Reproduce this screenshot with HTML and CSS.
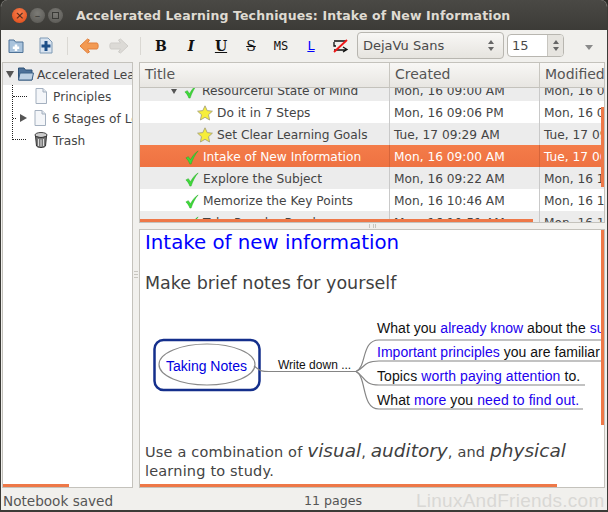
FILE: index.html
```html
<!DOCTYPE html>
<html lang="en">
<head>
<meta charset="utf-8">
<title>Accelerated Learning Techniques</title>
<link rel="stylesheet" href="styles.css">
</head>
<body>
<svg class="defs" width="0" height="0">
  <defs>
    <symbol id="check" viewBox="0 0 16 16"><path d="M1 8.500 L3.800 7 L6.300 10.500 C8.500 6.500 11 3 15 .5 C11.500 4.500 9 9.500 7 15.500 L5.500 15.500 C4.500 12.500 3 10.200 1 8.500Z" fill="#3fd93a" stroke="#1fa51f" stroke-width=".5"/></symbol>
    <symbol id="star" viewBox="0 0 16 16"><path d="M8 .8 L10.200 5.600 L15.400 6.200 L11.500 9.700 L12.600 15 L8 12.300 L3.400 15 L4.500 9.700 L.6 6.200 L5.800 5.600Z" fill="#f7ee3a" stroke="#a8a47a" stroke-width=".9"/></symbol>
    <symbol id="page" viewBox="0 0 14 16"><path d="M2 .5 H9 L12.500 4 V15.500 H2Z" fill="#f4f6f9" stroke="#a4b0bf"/><path d="M9 .5 V4 H12.500" fill="#dfe5ec" stroke="#a4b0bf"/></symbol>
  </defs>
</svg>
<div class="window">
  <header class="titlebar">
    <div class="controls">
      <span class="ctl ctl-close">×</span>
      <span class="ctl ctl-min">–</span>
      <span class="ctl ctl-max"><i class="ctl-square"></i></span>
    </div>
    <h1 class="wintitle">Accelerated Learning Techniques: Intake of New Information</h1>
  </header>

  <div class="toolbar">
    <button class="tool">
      <svg width="16" height="16" viewBox="0 0 16 16"><path d="M1 2 H6 L7.500 4 H15 V14.500 H1Z" fill="#a9c3dc" stroke="#4f7397"/><path d="M8 6.500 V13 M4.800 9.700 H11.200" stroke="#fff" stroke-width="2.500"/></svg>
    </button>
    <button class="tool">
      <svg width="16" height="18" viewBox="0 0 16 18"><path d="M2 1 H10 L14 5 V16 H2Z" fill="#d9e4f0" stroke="#7f9ab5"/><path d="M8 4 V14 M3.500 9 H12.500" stroke="#1d4f88" stroke-width="3"/></svg>
    </button>
    <span class="sep"></span>
    <button class="tool">
      <svg width="20" height="16" viewBox="0 0 20 16"><path d="M1 8 L8.500 1 L10.500 2 L8.500 5 H18 C19.500 5 19.500 11 18 11 H8.500 L10.500 14 L8.500 15Z" fill="#f39a53" stroke="#e07f3c"/></svg>
    </button>
    <button class="tool">
      <svg width="20" height="16" viewBox="0 0 20 16"><path d="M19 8 L11.500 1 L9.500 2 L11.500 5 H2 C.5 5 .5 11 2 11 H11.500 L9.500 14 L11.500 15Z" fill="#dcdad6" stroke="#cfcdc9"/></svg>
    </button>
    <span class="sep"></span>
    <button class="tool fmt fmt-b">B</button>
    <button class="tool fmt fmt-i">I</button>
    <button class="tool fmt fmt-u">U</button>
    <button class="tool fmt fmt-s">S</button>
    <button class="tool fmt fmt-m">MS</button>
    <button class="tool fmt fmt-l">L</button>
    <button class="tool">
      <svg width="16" height="14" viewBox="0 0 16 14"><path d="M1 2 H13 M1 3 V7 H3 M1 11 H13 M10 8 L14 10.500 L10 13" fill="none" stroke="#111" stroke-width="1.300"/><path d="M1 13 L14 1" stroke="#f01818" stroke-width="1.800"/></svg>
    </button>
    <div class="combo">
      <span class="combo-label">DejaVu Sans</span>
      <span class="updown"><i class="up"></i><i class="down"></i></span>
    </div>
    <div class="spin">
      <span class="spin-val">15</span>
      <span class="spin-btns"><i class="up"></i><i class="down"></i></span>
    </div>
    <i class="more"></i>
  </div>

  <main class="main">
    <aside class="tree">
      <div class="tree-row tree-root">
        <i class="arrow-down"></i>
        <svg class="folder" width="16" height="14" viewBox="0 0 16 14"><path d="M.5 1 H6 L7.500 3 H14 V13 H.5Z" fill="#4d7199" stroke="#2f5277"/><path d="M2 6 H15.500 L14 13 H.5Z" fill="#bdd0e3" stroke="#3d6288"/></svg>
        <span class="tree-label">Accelerated Learning</span>
      </div>
      <div class="tree-row tree-child">
        <svg class="ic-page" width="14" height="16"><use href="#page"/></svg>
        <span class="tree-label">Principles</span>
      </div>
      <div class="tree-row tree-child">
        <i class="arrow-right"></i>
        <svg class="ic-page" width="14" height="16"><use href="#page"/></svg>
        <span class="tree-label">6 Stages of Learning</span>
      </div>
      <div class="tree-row tree-child">
        <svg class="ic-trash" width="14" height="16" viewBox="0 0 14 16"><ellipse cx="7" cy="3" rx="6" ry="2.500" fill="#ccc" stroke="#444"/><path d="M1.500 4 L2.500 14 C4 16 10 16 11.500 14 L12.500 4 C10 6 4 6 1.500 4Z" fill="#777" stroke="#333"/><path d="M4.500 7 V14 M7 7.500 V14.500 M9.500 7 V14" stroke="#ddd"/></svg>
        <span class="tree-label">Trash</span>
      </div>
      <i class="tree-dots"></i>
      <i class="bar bar-tree"></i>
    </aside>

    <div class="sash-v"><i class="grip-v"></i></div>

    <div class="right">
      <section class="list">
        <div class="list-head">
          <div class="col">Title</div>
          <div class="col">Created</div>
          <div class="col">Modified</div>
        </div>
        <div class="list-body">
          <div class="rows">
            <div class="row even"><div class="cell t t2"><i class="arrow-down small"></i><svg class="ic" width="14" height="15"><use href="#check"/></svg>Resourceful State of Mind</div><div class="cell">Mon, 16 09:00 AM</div><div class="cell">Mon, 16 09:00 AM</div></div>
            <div class="row"><div class="cell t t3"><svg class="ic" width="16" height="16"><use href="#star"/></svg>Do it in 7 Steps</div><div class="cell">Mon, 16 09:06 PM</div><div class="cell">Mon, 16 09:06 PM</div></div>
            <div class="row even"><div class="cell t t3"><svg class="ic" width="16" height="16"><use href="#star"/></svg>Set Clear Learning Goals</div><div class="cell">Tue, 17 09:29 AM</div><div class="cell">Tue, 17 09:29 AM</div></div>
            <div class="row sel"><div class="cell t t1"><svg class="ic" width="14" height="15"><use href="#check"/></svg>Intake of New Information</div><div class="cell">Mon, 16 09:00 AM</div><div class="cell">Tue, 17 06:00 AM</div></div>
            <div class="row even"><div class="cell t t1"><svg class="ic" width="14" height="15"><use href="#check"/></svg>Explore the Subject</div><div class="cell">Mon, 16 09:22 AM</div><div class="cell">Mon, 16 10:22 AM</div></div>
            <div class="row"><div class="cell t t1"><svg class="ic" width="14" height="15"><use href="#check"/></svg>Memorize the Key Points</div><div class="cell">Mon, 16 10:46 AM</div><div class="cell">Mon, 16 10:46 AM</div></div>
            <div class="row even"><div class="cell t t1"><svg class="ic" width="14" height="15"><use href="#check"/></svg>Take Regular Breaks</div><div class="cell">Mon, 16 10:51 AM</div><div class="cell">Mon, 16 10:51 AM</div></div>
          </div>
          <i class="bar bar-list-v"></i>
          <i class="bar bar-list-h"></i>
        </div>
      </section>

      <div class="sash-h"><i class="grip-h"></i></div>

      <section class="editor">
        <h2 class="doc-title">Intake of new information</h2>
        <p class="doc-sub">Make brief notes for yourself</p>
        <div class="map">
          <svg class="map-lines" width="462" height="96" viewBox="0 0 462 96">
            <rect x="14.500" y="10" width="105" height="50" rx="9" fill="#fff" stroke="#142f8c" stroke-width="2.500"/>
            <ellipse cx="67" cy="34.500" rx="48" ry="20.500" fill="#fff" stroke="#8a8a8a" stroke-width="1.200"/>
            <g fill="none" stroke="#858585" stroke-width="1.200">
              <path d="M114 36 C121 42 123 41.500 131 41.500 H216"/>
              <path d="M216 41.500 C227 37 221 10 239 10 H463"/>
              <path d="M216 41.500 C225 38 223 31 239 31 H463"/>
              <path d="M216 41.500 C225 46 223 55 239 55 H445"/>
              <path d="M216 41.500 C227 47 221 79 239 79 H443"/>
            </g>
          </svg>
          <span class="node node-main">Taking Notes</span>
          <span class="node node-write">Write down ...</span>
          <span class="node node-a">What you <b class="lnk">already know</b> about the <b class="lnk">subject</b></span>
          <span class="node node-b"><b class="lnk">Important principles</b> you are familiar with</span>
          <span class="node node-c">Topics <b class="lnk">worth paying attention</b> to.</span>
          <span class="node node-d">What <b class="lnk">more</b> you <b class="lnk">need to find out.</b></span>
        </div>
        <p class="doc-body">Use a combination of <em>visual</em>, <em>auditory</em>, and <em>physical</em><br>learning to study.</p>
        <i class="bar bar-ed-v"></i>
        <i class="bar bar-ed-h"></i>
      </section>
    </div>
  </main>

  <footer class="status">
    <span class="status-l">Notebook saved</span>
    <span class="status-m">11 pages</span>
    <span class="watermark">LinuxAndFriends.com</span>
  </footer>
</div>
</body>
</html>
```
FILE: styles.css
```css
* { box-sizing: border-box; }
html, body { margin: 0; padding: 0; }
body { width: 608px; height: 512px; overflow: hidden; background: #2b2a26; font-family: "DejaVu Sans", sans-serif; color: #3c3c3c; }
.defs { position: absolute; }
.window { width: 608px; height: 512px; display: flex; flex-direction: column; background: #f1f0ed; border: solid #3c3b37; border-width: 0 1px 2px; border-radius: 7px 7px 0 0; overflow: hidden; }

.titlebar { height: 30px; flex: none; display: flex; align-items: center; background: linear-gradient(#4a4945, #3c3b37); padding-left: 11px; }
.controls { display: flex; gap: 3px; width: 64px; flex: none; }
.ctl { width: 15px; height: 15px; border-radius: 50%; display: flex; align-items: center; justify-content: center; font-size: 11px; line-height: 1; color: #3a3a36; background: radial-gradient(circle at 50% 35%, #7c7b76, #565551); }
.ctl-close { background: radial-gradient(circle at 50% 35%, #f88050, #dd4814); color: #4a2010; }
.ctl-square { display: block; width: 7px; height: 7px; border: 1px solid #3a3a36; }
.wintitle { margin: 0; font: bold 12.500px "DejaVu Sans", sans-serif; letter-spacing: .12px; color: #dfdbd2; white-space: nowrap; }

.toolbar { height: 31px; flex: none; display: flex; align-items: center; background: #f1f0ed; }
.tool { width: 30px; height: 28px; flex: none; border: 0; padding: 0; background: none; display: flex; align-items: center; justify-content: center; color: #111; }
.sep { width: 1px; height: 18px; background: #dad8d3; margin-left: 6px; flex: none; }
.sep + .tool { margin-left: 6px; }
.sep + .tool.fmt { margin-left: 5px; }
.fmt { font-size: 14px; line-height: 1; }
.fmt-b { font: bold 14px "DejaVu Serif", serif; }
.fmt-i { font: italic bold 14px "DejaVu Serif", serif; }
.fmt-u { font: bold 14px "DejaVu Serif", serif; text-decoration: underline; }
.fmt-s { font: 14px "DejaVu Serif", serif; text-decoration: line-through; }
.fmt-m { font: 12px "DejaVu Sans Mono", monospace; }
.fmt-l { font: 13px "DejaVu Sans", sans-serif; color: #0000ff; text-decoration: underline; }
.combo { width: 147px; height: 27px; flex: none; margin-left: 1px; border: 1px solid #b8b6b0; border-radius: 4px; background: linear-gradient(#f8f7f5, #e6e4df); display: flex; align-items: center; justify-content: space-between; padding: 0 9px 0 5px; font-size: 13px; color: #4a4a4a; }
.updown, .spin-btns { display: flex; flex-direction: column; gap: 3px; align-items: center; }
.up { width: 0; height: 0; border: 3.500px solid transparent; border-top: 0; border-bottom: 4px solid #666; }
.down { width: 0; height: 0; border: 3.500px solid transparent; border-bottom: 0; border-top: 4px solid #666; }
.spin { width: 57px; height: 23px; flex: none; margin-left: 3px; border: 1px solid #b8b6b0; border-radius: 4px; background: #fff; display: flex; overflow: hidden; font-size: 13px; color: #4a4a4a; }
.spin-val { flex: 1; padding: 3px 0 0 4px; }
.spin-btns { width: 16px; flex: none; background: #e6e4df; border-left: 1px solid #c8c6c0; justify-content: center; }
.more { margin-left: 21px; margin-top: 3px; width: 0; height: 0; border: 4px solid transparent; border-bottom: 0; border-top: 5px solid #8a8a8a; }

.main { flex: 1; min-height: 0; display: flex; padding: 1px 0 1px 1px; }
.tree { width: 131px; flex: none; position: relative; border: 1px solid #c4c2bc; background: #fff; overflow: hidden; font-size: 12.200px; }
.tree-row { height: 22px; display: flex; align-items: center; white-space: nowrap; color: #444; }
.tree-root { background: #ececec; padding-left: 3px; gap: 3px; }
.tree-child { padding-left: 31px; gap: 5px; }
.tree-child:nth-child(3) { padding-left: 17px; }
.tree-label { flex: none; margin-top: 2px; }
.folder, .ic-page, .ic-trash { flex: none; }
.arrow-down { width: 0; height: 0; flex: none; border: 4.500px solid transparent; border-bottom: 0; border-top: 7px solid #555; margin-right: 1px; }
.arrow-down.small { border-width: 5px 3.500px 0; margin-right: 7px; }
.arrow-right { width: 0; height: 0; flex: none; border: 4.500px solid transparent; border-right: 0; border-left: 7px solid #555; margin-right: 1px; }
.tree-dots { position: absolute; left: 9px; top: 22px; width: 14px; height: 55px; border-left: 1px dotted #222; border-bottom: 1px dotted #222; }
.tree-dots::before { content: ""; position: absolute; left: 0; top: 11px; width: 14px; border-top: 1px dotted #222; }
.tree-dots::after { content: ""; position: absolute; left: 0; top: 33px; width: 3px; border-top: 1px dotted #222; }

.sash-v { width: 6px; flex: none; display: flex; align-items: center; justify-content: center; }
.grip-v { width: 4px; height: 7px; border-top: 1px solid #c8c6c0; border-bottom: 1px solid #c8c6c0; box-shadow: inset 0 2px 0 #f1f0ed, inset 0 3px 0 #c8c6c0; margin-top: -2px; }
.right { flex: 1; min-width: 0; display: flex; flex-direction: column; margin-right: 2px; }

.list { height: 161px; flex: none; border: 1px solid #c4c2bc; background: #fff; display: flex; flex-direction: column; overflow: hidden; }
.list-head { height: 25px; flex: none; display: grid; grid-template-columns: 250px 150px 1fr; background: linear-gradient(#f8f7f5, #e8e6e2); border-bottom: 1px solid #c4c2bc; font-size: 14px; color: #555; }
.col { padding: 3px 0 0 5px; border-right: 1px solid #c8c6c0; white-space: nowrap; overflow: hidden; }
.col:last-child { border-right: 0; }
.list-body { flex: 1; min-height: 0; position: relative; overflow: hidden; }
.rows { margin-top: -9px; }
.row { height: 22px; display: grid; grid-template-columns: 250px 150px 1fr; font-size: 12.200px; color: #444; white-space: nowrap; }
.even { background: #ececec; }
.sel { background: linear-gradient(#f47c49, #ee7242); color: #fff; }
.cell { padding: 2px 0 0 4px; line-height: 20px; border-right: 1px solid #c9c9c9; overflow: hidden; }
.cell:last-child { border-right: 0; }
.sel .cell { border-right-color: #d5653a; }
.t { display: flex; align-items: center; }
.t1 { padding-left: 45px; }
.t2 { padding-left: 31px; }
.t3 { padding-left: 57px; }
.ic { flex: none; margin-right: 4px; }

.bar { position: absolute; background: #ee7848; display: block; }
.bar-tree { left: 0; bottom: 0; width: 66px; height: 3px; }
.bar-list-v { right: 0; top: 19px; width: 3px; height: 80px; }
.bar-list-h { left: 0; bottom: 0; width: 393px; height: 3px; }
.bar-ed-v { right: 0; top: 0; width: 3px; height: 195px; }
.bar-ed-h { left: 0; bottom: 0; width: 417px; height: 3px; }

.sash-h { height: 6px; flex: none; display: flex; justify-content: center; align-items: center; }
.grip-h { width: 7px; height: 4px; border-left: 1px solid #c8c6c0; border-right: 1px solid #c8c6c0; box-shadow: inset 3px 0 0 #f1f0ed, inset 4px 0 0 #c8c6c0; }

.editor { flex: 1; min-height: 0; position: relative; border: 1px solid #c4c2bc; background: #fff; overflow: hidden; padding: 0 0 0 5px; }
.doc-title { margin: 0; font: 19.800px/25px "DejaVu Sans", sans-serif; color: #0000ff; white-space: nowrap; }
.doc-sub { margin: 18px 0 0; font: 17.500px/21px "DejaVu Sans", sans-serif; color: #3f3f3f; white-space: nowrap; }
.map { position: relative; height: 96px; margin: 36px 0 0 -5px; }
.map-lines { position: absolute; left: 0; top: 0; }
.node { position: absolute; white-space: nowrap; font: 14px/16px "Liberation Sans", sans-serif; color: #111; }
.lnk { font-weight: normal; color: #2200ee; }
.node-main { left: 26px; top: 28px; color: #0000e0; }
.node-write { left: 138px; top: 27px; font-size: 12px; }
.node-a { left: 237px; top: -10px; letter-spacing: .03px; }
.node-b { left: 237px; top: 14px; letter-spacing: .03px; }
.node-c { left: 237px; top: 38px; letter-spacing: .1px; }
.node-d { left: 237px; top: 62px; letter-spacing: .1px; }
.doc-body { margin: 15px 0 0; white-space: nowrap; font: 14.500px/19px "DejaVu Sans", sans-serif; letter-spacing: .18px; color: #444; }
.doc-body em { font-size: 18.500px; line-height: 19px; font-style: italic; letter-spacing: 0; color: #3f3f3f; }

.status { height: 21px; flex: none; position: relative; display: flex; align-items: center; color: #555; padding: 2px 0 0 2px; }
.status-l { width: 301px; flex: none; font-size: 13.600px; }
.status-m { flex: none; font-size: 12.600px; }
.watermark { position: absolute; left: 415px; top: 1px; font: 19px/22px "Liberation Sans", sans-serif; letter-spacing: .25px; color: #d9d8d5; white-space: nowrap; }
```
